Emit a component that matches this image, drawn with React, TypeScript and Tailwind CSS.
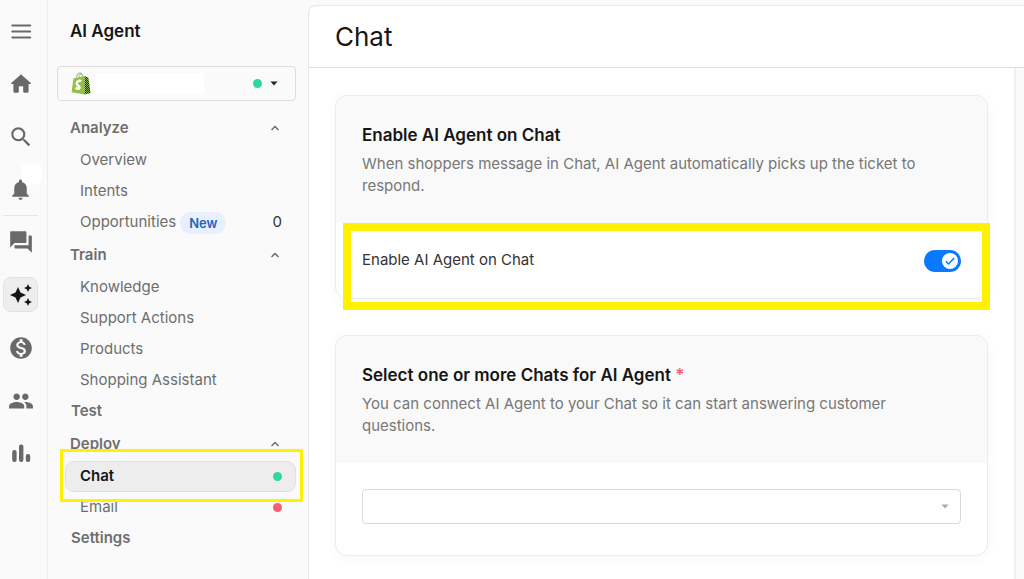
import { useState, type ReactNode } from "react";
import { MdAutoAwesome, MdForum, MdMonetizationOn, MdNotifications, MdPeople, MdSearch } from "react-icons/md";

function MenuGlyph() {
  return (
    <svg viewBox="0 0 26 26" className="size-[26px]" fill="none" stroke="currentColor" strokeWidth="2" strokeLinecap="round">
      <path d="M4.300 7.500h17.900M4.300 13.500h17.900M4.300 19.500h17.900" />
    </svg>
  );
}

function HomeGlyph() {
  return (
    <svg viewBox="0 0 24 24" className="size-[26px]" fill="currentColor">
      <path d="M10 19v-5h4v5c0 .55.45 1 1 1h3c.55 0 1-.45 1-1v-7h1.7c.46 0 .68-.57.33-.87L12.67 3.6c-.38-.34-.96-.34-1.34 0l-8.36 7.53c-.34.3-.13.87.33.87H5v7c0 .55.45 1 1 1h3c.55 0 1-.45 1-1z" />
    </svg>
  );
}

function BarsGlyph() {
  return (
    <svg viewBox="0 0 26 26" className="size-[26px]" fill="currentColor">
      <rect x="4.200" y="9" width="4.400" height="12" rx="2" />
      <rect x="11" y="3.500" width="4.400" height="17.500" rx="2" />
      <rect x="17.800" y="13" width="4.400" height="8" rx="2" />
    </svg>
  );
}

function ShopifyBag() {
  return (
    <svg viewBox="0 0 20 23" className="h-[23px] w-5 shrink-0">
      <defs>
        <pattern id="weave" width="2" height="2" patternUnits="userSpaceOnUse">
          <rect width="2" height="2" fill="#8db552" />
          <rect width="1" height="1" fill="#20281a" />
          <rect x="1" y="1" width="1" height="1" fill="#20281a" />
        </pattern>
      </defs>
      <path d="M5.300 6C5.800 3 7.600 1 9.200 1.100c1.700.1 2.500 2.100 2.600 4.300M8 5.500C8.400 3 9.600 1.800 10.700 2" fill="none" stroke="#a6b894" strokeWidth="1.100" />
      <path d="M2.400 6.600 13.500 4 13.600 22.600.6 20.200z" fill="#95bf47" />
      <path d="m13.500 4 3.800 1.500 2.300 15.600-6 1.500z" fill="url(#weave)" />
      <path d="M10.200 9.300C8.300 8.200 5.700 9 5.700 11.400c0 2.300 3.100 2.200 2.900 4.200-.2 1.600-2.400 1.400-4 .2" fill="none" stroke="#fff" strokeWidth="2.400" />
    </svg>
  );
}

function RailButton({ label, active, children }: { label: string; active?: boolean; children: ReactNode }) {
  return (
    <button
      type="button"
      aria-label={label}
      className={
        "relative flex size-[35px] items-center justify-center rounded-lg border " +
        (active ? "border-[#e2e2e2] bg-[#eeeeee] text-[#161616]" : "border-transparent text-[#696969]")
      }
    >
      {children}
    </button>
  );
}

function GroupHeader({ children }: { children: ReactNode }) {
  return (
    <button type="button" className="flex h-[34px] w-full items-center justify-between pr-4 pl-[13px] font-semibold">
      {children}
      <svg viewBox="0 0 10 8" className="h-2 w-2.5" fill="none" stroke="currentColor" strokeWidth="1.500">
        <path d="m1.500 6 3.500-3.500L8.500 6" />
      </svg>
    </button>
  );
}

function NavItem({ children, end }: { children: ReactNode; end?: ReactNode }) {
  return (
    <a href="#" className="flex h-[31px] items-center justify-between pr-3.5 pl-[23px]">
      <span className="flex items-center gap-1">{children}</span>
      {end}
    </a>
  );
}

function Card({ title, text, children }: { title: ReactNode; text: string; children: ReactNode }) {
  return (
    <section className="rounded-xl border border-[#ebebeb] bg-white shadow-[0_2px_14px_rgba(0,0,0,0.035)]">
      <div className="rounded-t-xl bg-[#f9f9f9] px-[26px] pt-[27px] pb-[26px]">
        <h2 className="text-[17px] leading-6 font-semibold text-[#161616]">{title}</h2>
        <p className="mt-1.5 max-w-[570px] text-[15px] leading-[22px] text-[#777777]">{text}</p>
      </div>
      {children}
    </section>
  );
}

export default function App() {
  const [enabled, setEnabled] = useState(true);

  return (
    <div className="flex min-h-screen bg-[#fafafa] font-[Inter,sans-serif] text-[15px] text-[#6e6e6e] [font-optical-sizing:none]">
      <nav aria-label="Main" className="flex w-12 shrink-0 flex-col items-start border-r border-[#ececec] pt-[13px] pl-[3px]">
        <div className="flex flex-col gap-[18px]">
          <RailButton label="Menu"><MenuGlyph /></RailButton>
          <RailButton label="Home"><HomeGlyph /></RailButton>
          <RailButton label="Search"><MdSearch size={26} /></RailButton>
          <RailButton label="Notifications">
            <span className="absolute -top-[10px] left-[17px] h-[22px] w-[21px] rounded-lg bg-white" />
            <MdNotifications size={25} className="relative" />
          </RailButton>
        </div>
        <hr className="my-2 w-[35px] border-[#e6e6e6]" />
        <div className="flex flex-col gap-[18px]">
          <RailButton label="Tickets"><MdForum size={26} /></RailButton>
          <RailButton label="AI Agent" active><MdAutoAwesome size={24} /></RailButton>
          <RailButton label="Revenue"><MdMonetizationOn size={26} /></RailButton>
          <RailButton label="Customers"><MdPeople size={26} /></RailButton>
          <RailButton label="Statistics"><BarsGlyph /></RailButton>
        </div>
      </nav>

      <aside className="w-[260px] shrink-0 pr-3 pl-[9px]">
        <h1 className="pt-[19px] pl-[13px] text-[17px] leading-6 font-semibold text-[#161616]">AI Agent</h1>
        <button
          type="button"
          aria-label="Select store"
          className="mt-[23px] flex h-[35px] w-full items-center rounded border border-[#dddddd] pr-[17px] pl-[13px]"
        >
          <ShopifyBag />
          <span className="ml-1 h-[21px] w-[109px] bg-white" />
          <span className="ml-auto size-[9px] rounded-full bg-[#2fd8a2]" />
          <svg viewBox="0 0 8 5" className="ml-2 h-[5px] w-2 fill-[#222222]">
            <path d="M.5.5h7L4 4.500z" />
          </svg>
        </button>

        <nav aria-label="AI Agent" className="mt-[10px]">
          <GroupHeader>Analyze</GroupHeader>
          <NavItem>Overview</NavItem>
          <NavItem>Intents</NavItem>
          <NavItem end={<span className="text-[#333333]">0</span>}>
            Opportunities
            <span className="rounded-full bg-[#e8f0ff] px-[9px] text-[13px] leading-[22px] font-semibold text-[#2563b8]">New</span>
          </NavItem>
          <GroupHeader>Train</GroupHeader>
          <NavItem>Knowledge</NavItem>
          <NavItem>Support Actions</NavItem>
          <NavItem>Products</NavItem>
          <NavItem>Shopping Assistant</NavItem>
          <a href="#" className="flex h-[31px] items-center pl-3.5 font-semibold">Test</a>
          <GroupHeader>Deploy</GroupHeader>
          <div className="relative pl-2">
            <a
              href="#"
              aria-current="page"
              className="flex h-[31px] items-center justify-between rounded-[9px] border border-[#e0e0e0] bg-[#ededed] pr-[13px] pl-3.5 font-semibold text-[#161616]"
            >
              Chat
              <span className="size-[9px] rounded-full bg-[#2fd8a2]" />
            </a>
            <div className="pointer-events-none absolute -top-3 -right-[7px] -bottom-[10px] left-[3px] border-3 border-[#fff100]" />
          </div>
          <NavItem end={<span className="size-[9px] rounded-full bg-[#f95f6e]" />}>Email</NavItem>
          <a href="#" className="flex h-[31px] items-center pl-3.5 font-semibold">Settings</a>
        </nav>
      </aside>

      <main className="mt-[5px] flex min-w-0 grow flex-col rounded-tl-lg border-t border-l border-[#e8e8e8] bg-white">
        <header className="border-b border-[#dedede] px-[26px] pt-[13px] pb-3">
          <h2 className="text-[26px] leading-9 text-[#161616]">Chat</h2>
        </header>
        <div className="flex grow">
          <div className="flex min-w-0 grow flex-col gap-9 px-[26px] py-[27px]">
            <Card title="Enable AI Agent on Chat" text="When shoppers message in Chat, AI Agent automatically picks up the ticket to respond.">
              <div className="relative flex h-[75px] items-center justify-between px-[26px]">
                <label htmlFor="enable-chat" className="text-[#333333]">Enable AI Agent on Chat</label>
                <span className="relative flex h-[22px] w-[37px]">
                  <input
                    id="enable-chat"
                    type="checkbox"
                    role="switch"
                    checked={enabled}
                    onChange={(e) => setEnabled(e.target.checked)}
                    className="h-full w-full cursor-pointer appearance-none rounded-full bg-[#c4c4c4] checked:bg-[#0a78ff]"
                  />
                  <span
                    className={
                      "pointer-events-none absolute top-[3px] flex size-4 items-center justify-center rounded-full bg-white " +
                      (enabled ? "right-[3px]" : "left-[3px]")
                    }
                  >
                    <svg viewBox="0 0 12 12" className="size-3" fill="none" stroke="#0a78ff" strokeWidth="1.500">
                      <path d="m1.800 6.300 2.700 2.700 5.700-6" />
                    </svg>
                  </span>
                </span>
                <div className="pointer-events-none absolute top-0 -right-[3px] -bottom-3 left-[7px] border-8 border-[#fff100]" />
              </div>
            </Card>

            <Card
              title={<>Select one or more Chats for AI Agent <span className="text-[#f95f6e]">*</span></>}
              text="You can connect AI Agent to your Chat so it can start answering customer questions."
            >
              <div className="relative px-[26px] pt-[26px] pb-[31px]">
                <select aria-label="Chats for AI Agent" className="block h-[35px] w-full appearance-none rounded border border-[#d9d9d9] bg-white px-3">
                  <option value="" />
                </select>
                <svg viewBox="0 0 8 5" className="pointer-events-none absolute top-[41px] right-[38px] h-[5px] w-2 fill-[#aaaaaa]">
                  <path d="M.5.5h7L4 4.500z" />
                </svg>
              </div>
            </Card>
          </div>
          <div className="w-2.5 shrink-0 border-l-2 border-[#f0f0f0] bg-[#fafafa]" />
        </div>
      </main>
    </div>
  );
}
